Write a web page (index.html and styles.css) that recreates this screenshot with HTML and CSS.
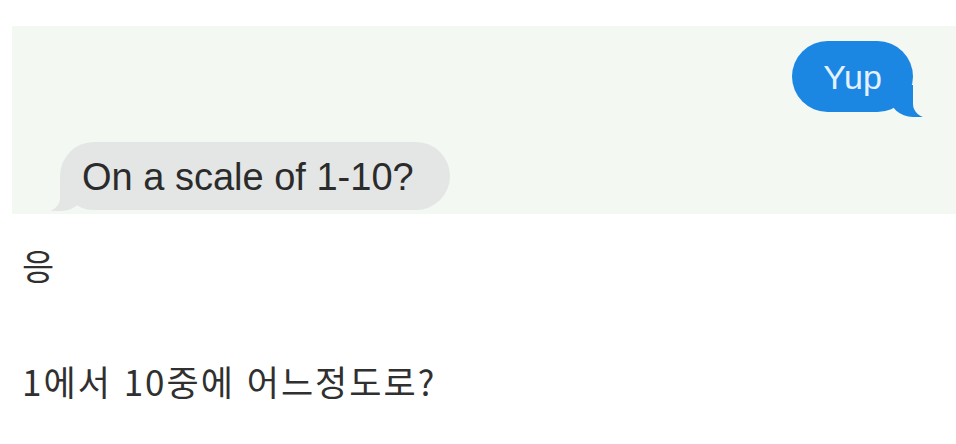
FILE: index.html
```html
<!DOCTYPE html>
<html lang="ko">
<head>
<meta charset="utf-8">
<title>On a scale of 1-10?</title>
<link rel="stylesheet" href="styles.css">
</head>
<body>
  <div class="shot">
    <div class="chat">
      <div class="row row-sent">
        <div class="bubble sent"><span class="txt">Yup</span></div>
      </div>
      <div class="row row-recv">
        <div class="bubble recv"><span class="txt">On a scale of 1-10?</span></div>
      </div>
    </div>
    <div class="caption">
      <p class="line line-1">응</p>
      <p class="line line-2">1에서 10중에 어느정도로?</p>
    </div>
  </div>
</body>
</html>
```
FILE: styles.css
```css
* { box-sizing: border-box; }
html, body {
  margin: 0;
  padding: 0;
  background: #ffffff;
}
body {
  width: 956px;
  height: 444px;
  overflow: hidden;
}
.shot {
  display: flex;
  flex-direction: column;
  padding-top: 26px;
}
.chat {
  margin-left: 12px;
  height: 188px;
  background: #f3f8f2;
  display: flex;
  flex-direction: column;
  overflow: hidden;
  padding-top: 15px;
}
.row {
  display: flex;
}
.row-sent {
  justify-content: flex-end;
  padding-right: 43px;
}
.row-recv {
  justify-content: flex-start;
  padding-left: 48px;
  margin-top: 30px;
}
.bubble {
  position: relative;
  display: flex;
  align-items: center;
  font-family: "Liberation Sans", Arial, sans-serif;
}
.txt {
  position: relative;
  z-index: 2;
}
.sent {
  width: 121px;
  height: 71px;
  border-radius: 36px;
  background: #1c87e3;
  color: #e4f1ff;
  font-size: 34px;
  justify-content: center;
  padding-top: 1px;
}
.sent::before {
  content: "";
  position: absolute;
  right: -12px;
  bottom: -5px;
  width: 36px;
  height: 32px;
  background: #1c87e3;
  border-bottom-left-radius: 24px 22px;
  z-index: 0;
}
.sent::after {
  content: "";
  position: absolute;
  right: -40px;
  bottom: -6px;
  width: 40px;
  height: 40px;
  background: #f3f8f2;
  border-bottom-left-radius: 16px 14px;
  z-index: 1;
}
.recv {
  width: 390px;
  height: 68px;
  border-radius: 34px;
  background: #e3e6e5;
  color: #2b2b2b;
  font-size: 38px;
  padding-left: 22px;
  padding-top: 2px;
}
.recv::before {
  content: "";
  position: absolute;
  left: -11px;
  bottom: -1px;
  width: 36px;
  height: 32px;
  background: #e3e6e5;
  border-bottom-right-radius: 24px 22px;
  z-index: 0;
}
.recv::after {
  content: "";
  position: absolute;
  left: -40px;
  bottom: -2px;
  width: 40px;
  height: 40px;
  background: #f3f8f2;
  border-bottom-right-radius: 16px 14px;
  z-index: 1;
}
.caption {
  display: flex;
  flex-direction: column;
  padding-left: 22px;
  font-family: "Noto Sans CJK KR", "Noto Sans", sans-serif;
  color: #303030;
  font-size: 35px;
  letter-spacing: 2px;
}
.line {
  margin: 0;
  line-height: 1;
}
.line-1 {
  margin-top: 33px;
}
.line-2 {
  margin-top: 81px;
}
```
